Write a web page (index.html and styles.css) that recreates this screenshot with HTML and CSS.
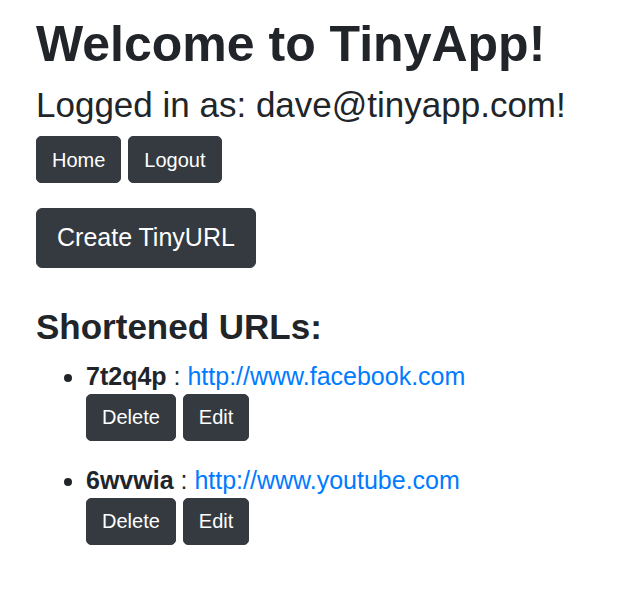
FILE: index.html
```html
<!DOCTYPE html>
<html lang="en">
<head>
<meta charset="utf-8">
<title>TinyApp</title>
<link rel="stylesheet" href="styles.css">
</head>
<body>
<main class="page">
  <h1 class="title">Welcome to TinyApp!</h1>
  <h3 class="user">Logged in as: dave@tinyapp.com!</h3>
  <div class="nav-btns">
    <a class="btn" href="#">Home</a>
    <a class="btn" href="#">Logout</a>
  </div>
  <a class="btn btn-lg" href="#">Create TinyURL</a>
  <h3 class="section">Shortened URLs:</h3>
  <ul class="urls">
    <li class="url-item">
      <div class="url-line"><b>7t2q4p</b> : <a class="link" href="#">http://www.facebook.com</a></div>
      <div class="item-btns">
        <button class="btn">Delete</button>
        <button class="btn">Edit</button>
      </div>
    </li>
    <li class="url-item">
      <div class="url-line"><b>6wvwia</b> : <a class="link" href="#">http://www.youtube.com</a></div>
      <div class="item-btns">
        <button class="btn">Delete</button>
        <button class="btn">Edit</button>
      </div>
    </li>
  </ul>
</main>
</body>
</html>
```
FILE: styles.css
```css
* { box-sizing: border-box; }
html { font-size: 20px; }
body {
  margin: 0;
  font-family: "Liberation Sans", Arial, sans-serif;
  font-size: 20px;
  line-height: 1.5;
  color: #212529;
  background: #fff;
}
.page {
  padding: 14px 36px 0;
  display: flex;
  flex-direction: column;
  align-items: flex-start;
}
.title {
  margin: 0 0 10px;
  font-size: 50px;
  font-weight: 700;
  line-height: 1.2;
}
.user {
  margin: 0 0 10px;
  font-size: 35px;
  font-weight: 400;
  line-height: 1.2;
}
.section {
  margin: 38px 0 10px;
  font-size: 35px;
  font-weight: 700;
  line-height: 1.2;
}
.nav-btns, .item-btns {
  display: flex;
  gap: 7px;
}
.nav-btns { margin-bottom: 25px; }
.btn {
  display: inline-block;
  font-family: inherit;
  font-size: 20px;
  line-height: 30px;
  padding: 7.5px 15px;
  border: 1px solid #343a40;
  border-radius: 5px;
  background: #343a40;
  color: #fff;
  text-decoration: none;
  cursor: pointer;
}
.btn-lg {
  font-size: 25px;
  line-height: 37.5px;
  padding: 10px 20px;
  border-radius: 6px;
}
.urls {
  margin: 0;
  padding-left: 50px;
  width: 100%;
}
.url-item {
  font-size: 25px;
  line-height: 36px;
  margin-bottom: 21px;
}
.url-line b { font-weight: 700; }
.link {
  color: #007bff;
  text-decoration: none;
}
```
